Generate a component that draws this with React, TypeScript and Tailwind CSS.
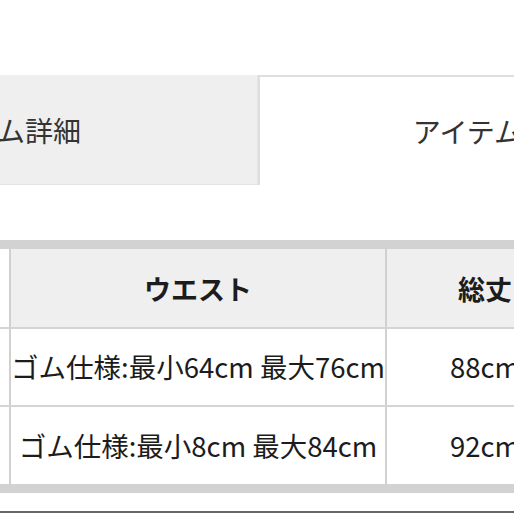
export default function App() {
  const rows = [
    { waist: 'ゴム仕様:最小64cm 最大76cm', length: '88cm' },
    { waist: 'ゴム仕様:最小8cm 最大84cm', length: '92cm' },
  ];

  return (
    <div className="w-[514px] h-[514px] overflow-hidden bg-white font-['Noto_Sans_CJK_JP','Noto_Sans',sans-serif]">
      {/* Tabs */}
      <div className="mt-[75px] flex h-[110px] ml-[-260px]">
        <div className="w-[518px] shrink-0 bg-[#efefef] border-r border-b border-[#e4e4e4] flex items-center justify-center text-[28px] leading-none text-[#333]">
          アイテム詳細
        </div>
        <div className="w-[500px] shrink-0 bg-white border-t-2 border-l-2 border-[#dedede] flex items-center justify-center text-[28px] leading-none text-[#333]">
          アイテムサイズ
        </div>
      </div>

      {/* Size table */}
      <div className="mt-[55px] w-max border-y-[9px] border-[#d2d2d2] text-[#1c1c1c]">
        <div className="grid grid-cols-[11px_376px_196px] h-[80px] border-b-2 border-[#d4d4d4]">
          <div className="bg-white border-r-2 border-[#d0d0d0]" />
          <div className="bg-[#efefef] border-r-2 border-[#d0d0d0] flex items-center justify-center text-[27px] font-bold leading-none">
            ウエスト
          </div>
          <div className="bg-[#efefef] flex items-center justify-center text-[27px] font-bold leading-none">
            総丈
          </div>
        </div>
        {rows.map((r, i) => (
          <div
            key={i}
            className={`grid grid-cols-[11px_376px_196px] ${i === 0 ? 'h-[78px] border-b-2 border-[#d4d4d4]' : 'h-[77px]'}`}
          >
            <div className="bg-white border-r-2 border-[#d0d0d0]" />
            <div className="border-r-2 border-[#d0d0d0] flex items-center justify-center text-[27.5px] leading-none whitespace-nowrap">
              {r.waist}
            </div>
            <div className="flex items-center justify-center text-[27.5px] leading-none">
              {r.length}
            </div>
          </div>
        ))}
      </div>

      <div className="mt-[18px] h-[2px] bg-[#666]" />
    </div>
  );
}
